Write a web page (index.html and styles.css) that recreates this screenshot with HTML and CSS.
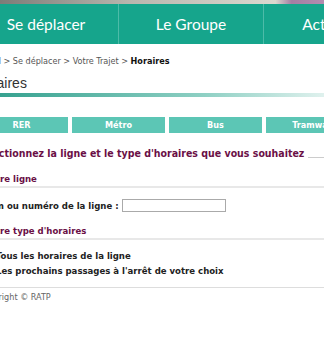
FILE: index.html
```html
<!DOCTYPE html>
<html lang="fr">
  <head>
    <meta name="viewport" content="width=device-width" />
    <title>RATP - Horaires</title>
    <link rel="stylesheet" href="styles.css">
  </head>
  <body>
    <header class="banner">
      <div class="photo"></div>
      <nav class="main-nav">
        <a href="#">Se déplacer</a>
        <a href="#">Le Groupe</a>
        <a href="#">Actualités</a>
      </nav>
    </header>
    <main class="page">
      <p class="breadcrumb">Accueil &gt; Se déplacer &gt; Votre Trajet &gt; <strong>Horaires</strong></p>
      <h1 class="title">Horaires</h1>
      <ul class="modes">
        <li>RER</li>
        <li>Métro</li>
        <li>Bus</li>
        <li>Tramway</li>
      </ul>
      <form class="schedule">
        <h2 class="intro"><span>Sélectionnez la ligne et le type d'horaires que vous souhaitez</span></h2>
        <h3 class="step">Votre ligne</h3>
        <div class="field">
          <label for="line">Nom ou numéro de la ligne :</label>
          <input id="line" type="text">
        </div>
        <h3 class="step">Votre type d'horaires</h3>
        <div class="choices">
          <label><input type="radio" name="kind" checked> Tous les horaires de la ligne</label>
          <label><input type="radio" name="kind"> Les prochains passages à l'arrêt de votre choix</label>
        </div>
      </form>
      <footer class="footer">Copyright © RATP</footer>
    </main>
  </body>
</html>
```

FILE: styles.css
```css
body {
  margin: 0;
  overflow: hidden;
  background: #fff;
  font-family: "DejaVu Sans Condensed", "DejaVu Sans", sans-serif;
}

/* header : photo strip + main navigation */
.photo {
  height: 4px;
  background: linear-gradient(to right, #7d7c78, #b9b6ae 40%, #dcd8cf 85%, #a47ea3 90%, #b48cb0);
}

.main-nav {
  display: flex;
  height: 40px;
  margin-left: -26px;
  background: #16a58c;
}

.main-nav a {
  flex: 0 0 144px;
  display: flex;
  align-items: center;
  justify-content: center;
  border-right: 1px solid #4dbba8;
  color: #fff;
  font-family: Lato, sans-serif;
  font-size: 15.5px;
  text-decoration: none;
}

/* page content */
.page {
  margin-left: -26px;
  width: 420px;
}

.breadcrumb {
  margin: 12px 0 0 -2px;
  color: #555;
  font-size: 9px;
  line-height: 10px;
}

.breadcrumb strong {
  color: #111;
}

.title {
  margin: 9px 0 0;
  padding-bottom: 6px;
  color: #333;
  font-family: "Liberation Sans", Arial, sans-serif;
  font-size: 14px;
  font-weight: normal;
  line-height: 16px;
  background: linear-gradient(to right, #2b9c89, #8fd0c4 55%, #e4f3f0 85%, #fff) no-repeat left bottom / 100% 4px;
}

.modes {
  display: flex;
  gap: 4px;
  margin: 20px 0 0 1px;
  padding: 0;
  list-style: none;
}

.modes li {
  flex: 0 0 93px;
  height: 16px;
  line-height: 16px;
  background: #5cc6b5;
  color: #fff;
  font-size: 9px;
  font-weight: bold;
  text-align: center;
}

.intro {
  display: flex;
  align-items: center;
  gap: 4px;
  margin: 14px 0 0 2px;
  color: #6a0f46;
  font-size: 10.5px;
  line-height: 12px;
}

.intro::after {
  content: "";
  flex: 1;
  height: 1px;
  margin-top: 8px;
  background: #ccc;
}

.step {
  margin: 14px 0 0 10px;
  padding-bottom: 1px;
  border-bottom: 2px solid #e8e8e8;
  color: #6a0f46;
  font-size: 9.5px;
  line-height: 12px;
}

.field {
  display: flex;
  align-items: center;
  gap: 3px;
  height: 13px;
  margin: 11px 0 0 8px;
}

.field label,
.choices label {
  color: #222;
  font-size: 9.5px;
  font-weight: bold;
}

.field input {
  box-sizing: border-box;
  width: 104px;
  height: 13px;
  margin: 0;
  padding: 1px;
  border: 1px solid #aaa;
}

.field + .step {
  margin-top: 13px;
}

.choices {
  display: flex;
  flex-direction: column;
  gap: 3px;
  margin: 10px 0 0 8px;
}

.choices label {
  display: flex;
  align-items: center;
  line-height: 12px;
}

.choices input {
  width: 10px;
  height: 10px;
  margin: 0 4px 0 0;
}

.footer {
  margin-top: 10px;
  padding: 4px 0 0 4px;
  border-top: 1px solid #ddd;
  color: #666;
  font-size: 9px;
  line-height: 10px;
}
```
